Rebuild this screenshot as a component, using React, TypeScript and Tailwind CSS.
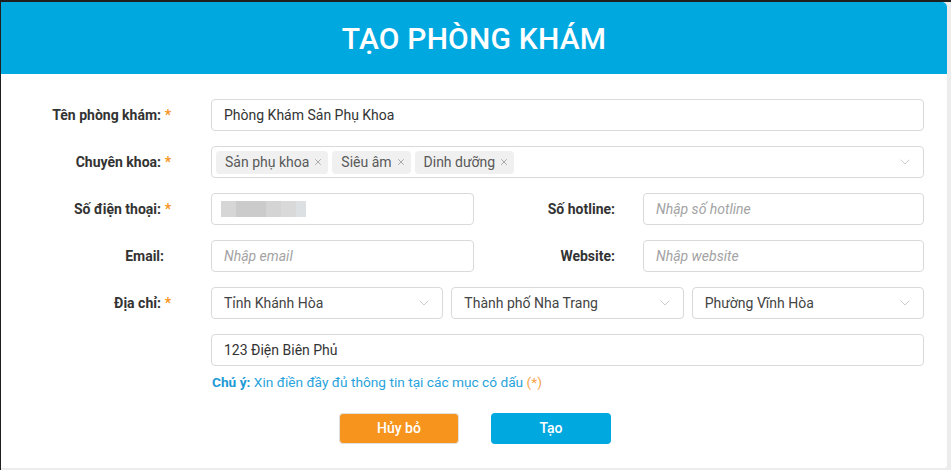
import { ChevronDown, X } from "lucide-react";

function Label({ text, required, width }: { text: string; required?: boolean; width: string }) {
  return (
    <div
      className={`${width} relative shrink-0 ${required ? "pr-[10px]" : "pr-[7px]"} text-right text-[14px] font-bold leading-5 text-[#333]`}
    >
      {text}
      {required && <span className="absolute right-0 top-0 text-[#f7941d]">*</span>}
    </div>
  );
}

function TextInput({ value, placeholder, width }: { value?: string; placeholder?: string; width: string }) {
  return (
    <div className={`${width} flex h-8 shrink-0 items-center rounded border border-[#d9d9d9] bg-white px-3 text-[14px]`}>
      {value ? (
        <span className="text-[#333]">{value}</span>
      ) : (
        <span className="italic text-[#a3a3a3]">{placeholder}</span>
      )}
    </div>
  );
}

function Select({ value }: { value: string }) {
  return (
    <div className="flex h-8 flex-1 items-center justify-between rounded border border-[#d9d9d9] bg-white pl-3 pr-2.5 text-[14px] text-[#444]">
      <span>{value}</span>
      <ChevronDown className="h-4 w-4 text-[#c4c4c4]" strokeWidth={1.3} />
    </div>
  );
}

export default function App() {
  const chips = ["Sản phụ khoa", "Siêu âm", "Dinh dưỡng"];

  return (
    <div
      className="h-[470px] w-[951px] overflow-hidden border-l border-t-2 border-[#1f1f1f] bg-[#ececec]"
      style={{ fontFamily: "Roboto, 'Liberation Sans', sans-serif" }}
    >
      <div className="flex h-[466px] w-[946px] flex-col overflow-hidden rounded-tr-[5px] rounded-br-[3px] bg-white">
        <div className="flex h-[72px] shrink-0 items-center justify-center bg-[#00a8e0]">
          <h1 className="text-[30px] font-medium tracking-[0.2px] text-white">TẠO PHÒNG KHÁM</h1>
        </div>

        <div className="flex flex-col gap-[15px] pt-[25px]">
          <div className="flex items-center">
            <Label text="Tên phòng khám:" required width="w-[170px]" />
            <div className="ml-[40px]">
              <TextInput value="Phòng Khám Sản Phụ Khoa" width="w-[713px]" />
            </div>
          </div>

          <div className="flex items-center">
            <Label text="Chuyên khoa:" required width="w-[170px]" />
            <div className="ml-[40px] flex h-8 w-[713px] items-center justify-between rounded border border-[#d9d9d9] pl-1 pr-2.5">
              <div className="flex gap-[4px]">
                {chips.map((c) => (
                  <div key={c} className="flex h-[23px] items-center gap-[4px] rounded bg-[#f0f0f0] pl-[9px] pr-[5px] text-[14px] text-[#595959]">
                    {c}
                    <X className="h-[10px] w-[10px] text-[#8c8c8c]" strokeWidth={1.7} />
                  </div>
                ))}
              </div>
              <ChevronDown className="h-4 w-4 text-[#c4c4c4]" strokeWidth={1.3} />
            </div>
          </div>

          <div className="flex items-center">
            <Label text="Số điện thoại:" required width="w-[170px]" />
            <div className="ml-[40px] flex h-8 w-[263px] items-center rounded border border-[#d9d9d9] px-[9px]">
              <div className="flex h-4 blur-[0.5px]">
                <div className="w-[15px] bg-[#d6d6d6]" />
                <div className="w-[30px] bg-[#cbcbcb]" />
                <div className="w-[15px] bg-[#d4d4d4]" />
                <div className="w-[15px] bg-[#d9d9d9]" />
                <div className="w-[10px] bg-[#dde0e3]" />
              </div>
            </div>
            <Label text="Số hotline:" width="w-[148px]" />
            <div className="ml-[21px]">
              <TextInput placeholder="Nhập số hotline" width="w-[281px]" />
            </div>
          </div>

          <div className="flex items-center">
            <Label text="Email:" width="w-[170px]" />
            <div className="ml-[40px]">
              <TextInput placeholder="Nhập email" width="w-[263px]" />
            </div>
            <Label text="Website:" width="w-[148px]" />
            <div className="ml-[21px]">
              <TextInput placeholder="Nhập website" width="w-[281px]" />
            </div>
          </div>

          <div className="flex items-center">
            <Label text="Địa chỉ:" required width="w-[170px]" />
            <div className="ml-[40px] flex w-[713px] gap-[8px]">
              <Select value="Tỉnh Khánh Hòa" />
              <Select value="Thành phố Nha Trang" />
              <Select value="Phường Vĩnh Hòa" />
            </div>
          </div>

          <div className="flex flex-col pl-[210px]">
            <TextInput value="123 Điện Biên Phủ" width="w-[713px]" />
            <p className="mt-[6px] pl-px text-[13.7px] text-[#29a3db]">
              <span className="font-bold text-[#1e9ad6]">Chú ý:</span> Xin điền đầy đủ thông tin tại các mục có dấu{" "}
              <span className="text-[#f7a24a]">(*)</span>
            </p>
          </div>

          <div className="mt-[5px] flex justify-center gap-[32px] pl-[2px]">
            <button className="h-[31px] w-[120px] rounded border border-[#e0e0e0] bg-[#f7941d] text-[14px] font-medium text-white">
              Hủy bỏ
            </button>
            <button className="h-[31px] w-[120px] rounded-sm bg-[#00a8e0] text-[14px] font-medium text-white">
              Tạo
            </button>
          </div>
        </div>
      </div>
    </div>
  );
}
